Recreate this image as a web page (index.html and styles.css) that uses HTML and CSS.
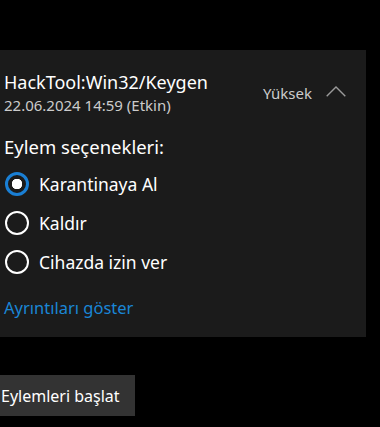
FILE: index.html
```html
<!DOCTYPE html>
<html lang="tr">
<head>
    <meta charset="UTF-8">
    <meta name="viewport" content="width=device-width, initial-scale=1.0">
    <title>Tehdit</title>
    <link rel="stylesheet" href="styles.css">
</head>
<body>
    <div class="threat">
        <div class="threat-head">
            <div class="threat-info">
                <div class="threat-name">HackTool:Win32/Keygen</div>
                <div class="threat-date">22.06.2024 14:59 (Etkin)</div>
            </div>
            <div class="threat-level">
                <span>Yüksek</span>
                <svg class="chevron" width="20" height="11" viewBox="0 0 20 11">
                    <polyline points="0.7,10.3 10,1 19.3,10.3" fill="none" stroke="#9a9a9a" stroke-width="1.4"/>
                </svg>
            </div>
        </div>

        <div class="options-title">Eylem seçenekleri:</div>
        <ul class="options">
            <li class="option"><span class="radio checked"></span>Karantinaya Al</li>
            <li class="option"><span class="radio"></span>Kaldır</li>
            <li class="option"><span class="radio"></span>Cihazda izin ver</li>
        </ul>

        <a class="details" href="#">Ayrıntıları göster</a>
    </div>

    <button class="start-button">Eylemleri başlat</button>
</body>
</html>
```

FILE: styles.css
```css
body {
    margin: 0;
    background-color: #000000;
    color: #ffffff;
    font-family: 'Noto Sans', 'Open Sans', sans-serif;
}
.threat {
    margin-top: 50px;
    width: 366px;
    height: 287px;
    box-sizing: border-box;
    background-color: #1b1b1b;
    padding: 20px 0 0 4px;
}
.threat-head {
    display: flex;
    justify-content: space-between;
    align-items: center;
    padding-right: 20px;
}
.threat-name {
    font-size: 18px;
    line-height: 24px;
}
.threat-date {
    margin-top: 1px;
    font-size: 15px;
    line-height: 20px;
    color: #cccccc;
}
.threat-level {
    display: flex;
    align-items: center;
    gap: 14px;
    font-size: 15px;
    color: #cccccc;
}
.chevron {
    display: block;
    margin-top: -2px;
}
.options-title {
    margin-top: 21px;
    font-size: 18.5px;
    line-height: 22px;
}
.options {
    list-style-type: none;
    margin: 6px 0 0 0;
    padding: 0;
}
.option {
    display: flex;
    align-items: center;
    gap: 10px;
    height: 39px;
    font-size: 17.5px;
}
.radio {
    width: 24px;
    height: 24px;
    box-sizing: border-box;
    border: 2px solid #ffffff;
    border-radius: 50%;
    margin-left: 1px;
}
.radio.checked {
    border: 3px solid #1a7fd4;
    background: radial-gradient(circle, #ffffff 0 5px, transparent 5.5px);
}
.details {
    display: block;
    margin-top: 15px;
    color: #1a86d6;
    text-decoration: none;
    font-size: 16.5px;
}
.start-button {
    display: block;
    margin-top: 38px;
    width: 135px;
    height: 41px;
    padding: 0 0 0 1px;
    text-align: left;
    border: none;
    background-color: #333333;
    color: #ffffff;
    font-family: 'Noto Sans', 'Open Sans', sans-serif;
    font-size: 16px;
}
```
